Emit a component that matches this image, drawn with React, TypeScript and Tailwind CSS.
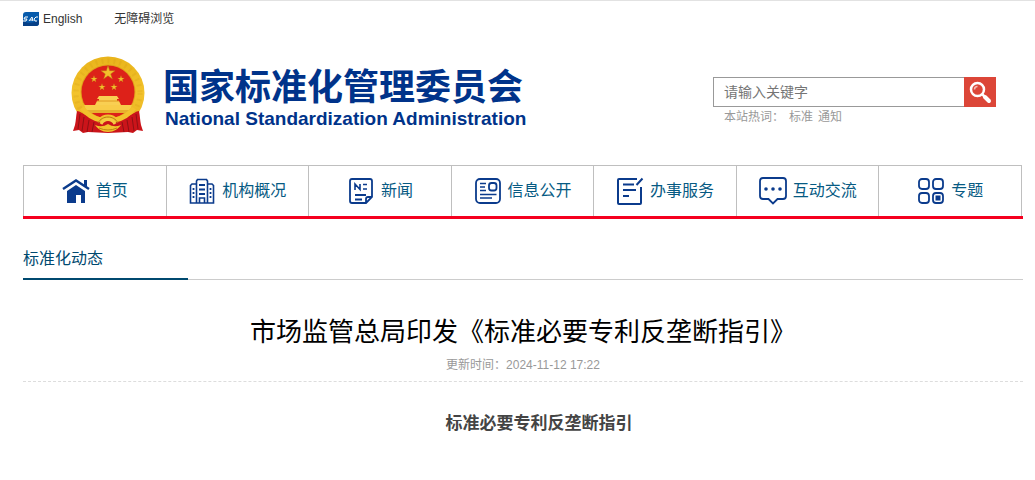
import React from 'react';

const Emblem: React.FC = () => {
  const star = 'M0 -1 L.225 -.31 L.951 -.309 L.363 .118 L.588 .809 L0 .382 L-.588 .809 L-.363 .118 L-.951 -.309 L-.225 -.31 Z';
  const stars = [
    { x: 37, y: 17, s: 7.5 },
    { x: 23, y: 23, s: 3.6 },
    { x: 50, y: 23, s: 3.6 },
    { x: 31, y: 31, s: 3.6 },
    { x: 43, y: 31, s: 3.6 },
  ];
  return (
    <svg className="w-[74px] h-[78px] shrink-0" viewBox="0 0 74 78" role="img" aria-label="国徽">
      <defs>
        <linearGradient id="gold" x1="0" y1="0" x2="0" y2="1">
          <stop offset="0" stopColor="#e9b41b" />
          <stop offset="0.5" stopColor="#f3c32c" />
          <stop offset="1" stopColor="#e8b01d" />
        </linearGradient>
      </defs>
      <circle cx="37" cy="37" r="36.5" fill="url(#gold)" />
      <circle cx="37" cy="37" r="32" fill="none" stroke="#c98e12" strokeWidth="5" strokeDasharray="2 4" opacity=".18" />
      <circle cx="37" cy="36" r="27.5" fill="#e0a41c" />
      <circle cx="37" cy="36" r="26.5" fill="#dd2119" />
      {stars.map((p, i) => (
        <path key={i} d={star} fill="#f3c12c" stroke="#b5720f" strokeWidth=".06" transform={`translate(${p.x} ${p.y}) scale(${p.s})`} />
      ))}
      <path d="M28 40h18l2 3h-2v2h2l2 4H24l2-4h2v-2h-2z" fill="#f9cf52" />
      <path d="M26 45h22" stroke="#e09a22" strokeWidth="1" />
      <path d="M13 49h48l-2 5H15z" fill="#f8cc49" />
      <path d="M15 54h44l-3 3H18z" fill="#e7b02d" />
      <path d="M6 55q2 0 5 2c8 5 17 8 26 8s18-3 26-8q3-2 5-2c1 5 1 9 2 14l2 6-6-1-4 3-5-1-20 1-20-1-5 1-4-3-6 1 2-6c1-5 1-9 2-14z" fill="#cb141a" />
      <path d="M9 58l-2 15M13 61l-2 14M18 64l-2 12M23 66l-2 10M65 58l2 15M61 61l2 14M56 64l2 12M51 66l2 10" fill="none" stroke="#8f1014" strokeWidth="1" />
      <path d="M11 52c7 9 13 11 19 12 3-4 11-4 14 0 6-1 12-3 19-12" fill="none" stroke="#f2c22c" strokeWidth="5" />
      <path d="M27 67c4-8 16-8 20 0" fill="none" stroke="#b97817" strokeWidth="1" />
      <path d="M30 68c3-6 11-6 14 0" fill="none" stroke="#f5cb43" strokeWidth="3" />
      <path d="M24 69q7 3 13-1 6 4 13 1c-3 4-7 7-13 7s-10-3-13-7z" fill="#f2c22c" />
      <path d="M28 72q9 4 18 0" fill="none" stroke="#bd8414" strokeWidth="1" />
    </svg>
  );
};

const iconProps = {
  className: 'w-7 h-7 shrink-0',
  viewBox: '0 0 28 28',
  fill: 'none',
  stroke: '#0b3b8c',
  strokeWidth: 1.8,
  'aria-hidden': true,
};

const HomeIcon = () => (
  <svg {...iconProps}>
    <path d="M1 12L14 3.500l13 8.500" strokeWidth="2.400" />
    <path d="M22 3h3v7l-3-2z" fill="#0b3b8c" stroke="none" />
    <path d="M14 8l9 6v12h-4v-8h-5v8H5V14z" fill="#0b3b8c" stroke="none" />
  </svg>
);

const BuildingIcon = () => (
  <svg {...iconProps}>
    <path d="M8.500 26V4l1-1.500h9l1 1.500v22M8 7H4L2.500 8.500V26h23V8.500L24 7h-4M11.500 26v-5h5v5" strokeWidth="1.600" />
    <path d="M11 8h6M11 12.500h6M11 17h6" />
    <path d="M5.500 11v2M5.500 15v2M5.500 19v2M22.500 11v2M22.500 15v2M22.500 19v2" />
  </svg>
);

const NewsIcon = () => (
  <svg {...iconProps}>
    <path d="M25 20V4q0-2-2-2H5Q3 2 3 4v20q0 2 2 2h14zM25 20h-4q-2 0-2 2v4M8 18h11M8 22.500h7" />
    <path d="M8 13V7l5 5.500V7M16 7.500h4M16 12h4" strokeWidth="1.600" />
  </svg>
);

const InfoIcon = () => (
  <svg {...iconProps}>
    <rect x="2" y="2" width="24" height="24" rx="4" />
    <rect x="15" y="6" width="7.500" height="7.500" rx="2.500" />
    <path d="M6 6.500h6M6 10h5M6 13.500h6M6 17.500h16.500M6 21h12" strokeWidth="1.600" />
  </svg>
);

const ServiceIcon = () => (
  <svg {...iconProps}>
    <path d="M21 2H3q-1 0-1 1v23q0 1 1 1h21q1 0 1-1V10M26.500 1.500l-6 6.500" strokeWidth="2" />
    <path d="M7 7.500h11M7 13h13M7 19h6" strokeWidth="2" />
  </svg>
);

const ChatIcon = () => (
  <svg {...iconProps}>
    <path d="M4 1h20q3 0 3 3v15q0 3-3 3h-5.500l-4.500 4.500L9.500 22H4q-3 0-3-3V4q0-3 3-3z" />
    <g fill="#0b3b8c" stroke="none">
      <circle cx="7" cy="12" r="1.800" />
      <circle cx="14" cy="12" r="1.800" />
      <circle cx="21" cy="12" r="1.800" />
    </g>
  </svg>
);

const TopicIcon = () => (
  <svg {...iconProps}>
    <rect x="2" y="2" width="10" height="10" rx="3" />
    <rect x="16" y="2" width="10" height="10" rx="3" />
    <rect x="2" y="16" width="10" height="10" rx="3" />
    <rect x="16" y="16" width="10" height="10" rx="3" />
    <path d="M18.500 18.500h5v5h-5z" fill="#0b3b8c" stroke="none" />
  </svg>
);

const navItems = [
  { icon: <HomeIcon />, title: '首页' },
  { icon: <BuildingIcon />, title: '机构概况' },
  { icon: <NewsIcon />, title: '新闻' },
  { icon: <InfoIcon />, title: '信息公开' },
  { icon: <ServiceIcon />, title: '办事服务' },
  { icon: <ChatIcon />, title: '互动交流' },
  { icon: <TopicIcon />, title: '专题' },
];

const App: React.FC = () => {
  return (
    <div className="bg-white border-t border-[#e2e2e2] pl-[23px] pr-3 font-['Liberation_Sans','Noto_Sans_CJK_SC',sans-serif]">
      <div className="flex items-center gap-8 h-9 text-xs text-[#333]">
        <a href="#english" className="flex items-center gap-1">
          <svg className="w-4 h-[14px]" viewBox="0 0 16 14" aria-hidden="true">
            <path d="M3 0h13v11q0 3-3 3H0V3q0-3 3-3z" fill="#075bac" />
            <path d="M0 9c5 3 11 2 16-1v3q0 3-3 3H0z" fill="#053f86" />
            <path d="M5 5H2L1 7h3L3 9H0M6 9l3-4 1 4M7 8h3M15 5h-2l-2 2 1 2h2" fill="none" stroke="#fff" strokeWidth="1" />
          </svg>
          English
        </a>
        <a href="#accessible">无障碍浏览</a>
      </div>

      <header className="flex items-start justify-between h-32 pl-12 pr-[27px] pt-[19px]">
        <div className="flex gap-[18px]">
          <Emblem />
          <h1 className="pt-3 text-[#00338a] font-bold whitespace-nowrap">
            <span className="block text-[36px] leading-[40px]">国家标准化管理委员会</span>
            <span className="block text-[19px] leading-[22px] pl-0.5">National Standardization Administration</span>
          </h1>
        </div>
        <div className="w-[283px] pt-[21px]">
          <form className="flex h-[30px]" onSubmit={(e) => e.preventDefault()}>
            <input
              type="text"
              aria-label="请输入关键字"
              placeholder="请输入关键字"
              className="flex-1 min-w-0 border border-r-0 border-[#999] px-2.5 text-sm text-[#333] placeholder:text-[#757575] outline-none"
            />
            <button type="submit" aria-label="搜索" className="flex items-center justify-center w-8 bg-[#dc4638]">
              <svg className="w-6 h-6" viewBox="0 0 24 24" fill="none" stroke="#fff" aria-hidden="true">
                <circle cx="9.500" cy="9.500" r="6.500" strokeWidth="2.500" />
                <path d="M14.500 14.500l3 3" strokeWidth="2.500" />
                <path d="M17 17l4 4" strokeWidth="4" strokeLinecap="round" />
                <path d="M6.500 9.500q0-3 3-3" stroke="#f4bdb7" strokeWidth="1.500" />
              </svg>
            </button>
          </form>
          <p className="flex gap-[5px] pl-[11px] text-xs leading-5 text-[#999]">
            本站热词： <a href="#standard">标准</a> <a href="#notice">通知</a>
          </p>
        </div>
      </header>

      <nav className="flex h-[54px] border-b-3 border-[#f5001f] pr-px">
        {navItems.map((item) => (
          <a
            key={item.title}
            href="#nav"
            className="flex flex-1 items-center justify-center gap-1.5 border-t border-l last:border-r border-[#bfbfbf] text-base text-[#065a83] whitespace-nowrap"
          >
            {item.icon}
            {item.title}
          </a>
        ))}
      </nav>

      <div className="flex mt-5 border-b border-[#ccc]">
        <h2 className="w-[165px] h-[41px] -mb-px border-b-2 border-[#00496f] text-base leading-[40px] text-[#00496f]">标准化动态</h2>
      </div>

      <main className="text-center">
        <h3 className="pt-8 text-[26px] leading-[40px] text-black">市场监管总局印发《标准必要专利反垄断指引》</h3>
        <p className="h-[30px] border-b border-dashed border-[#ddd] text-xs leading-[26px] text-[#999]">更新时间：2024-11-12 17:22</p>
        <p className="pt-7 indent-8 text-[17px] leading-7 font-bold text-[#444]">标准必要专利反垄断指引</p>
      </main>
    </div>
  );
};

export default App;
